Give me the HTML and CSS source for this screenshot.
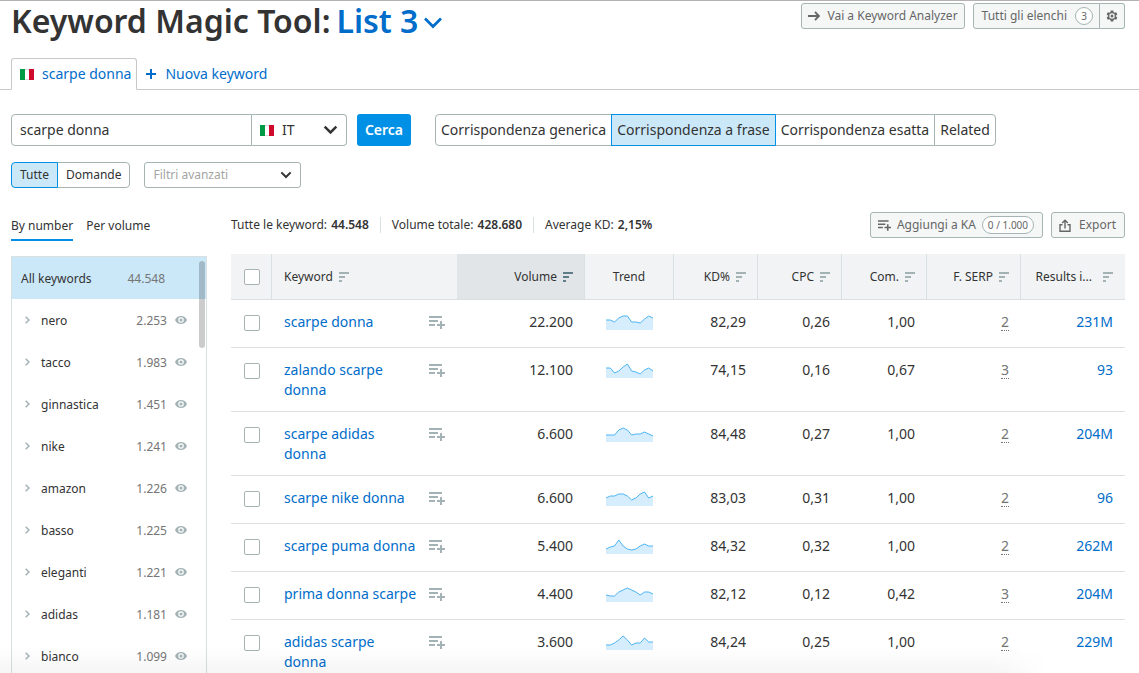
FILE: index.html
```html
<!DOCTYPE html>
<html lang="it">
<head>
<meta charset="utf-8">
<title>Keyword Magic Tool</title>
<link rel="stylesheet" href="styles.css">
</head>
<body>
<svg class="sprite" aria-hidden="true">
  <symbol id="flag" viewBox="0 0 14 11"><path fill="#fff" stroke="#d8dcdc" d="M.5.5h13v10H.5z"/><path fill="#009a44" d="M0 0h5v11H0z"/><path fill="#d00a2c" d="M9 0h5v11H9z"/></symbol>
  <symbol id="chevron" viewBox="0 0 18 12"><path fill="none" stroke="currentColor" stroke-width="3" d="m2 2 7 7 7-7"/></symbol>
  <symbol id="sort" viewBox="0 0 10 10"><path fill="currentColor" d="M0 0h10v2H0zM0 4h6v2H0zM0 8h3v2H0z"/></symbol>
  <symbol id="add" viewBox="0 0 16 13"><path fill="currentColor" d="M0 0h13v2H0zM0 4h9v2H0zM0 8h6v2H0zM11 5h2v3h3v2h-3v3h-2v-3H8V8h3z"/></symbol>
  <symbol id="eye" viewBox="0 0 12 8"><path fill="currentColor" fill-rule="evenodd" d="M6 0c2.700 0 5 1.600 6 4-1 2.400-3.300 4-6 4S1 6.400 0 4c1-2.400 3.300-4 6-4zm0 1.200a2.800 2.800 0 1 0 0 5.600 2.800 2.800 0 0 0 0-5.600zm0 1.200a1.600 1.600 0 1 1 0 3.200 1.600 1.600 0 0 1 0-3.200z"/></symbol>
  <symbol id="right" viewBox="0 0 5 8"><path fill="none" stroke="currentColor" stroke-width="1.500" d="m.7.7 3.300 3.300L.7 7.300"/></symbol>
</svg>
<div class="app">
  <header class="head">
    <h1 class="title">Keyword Magic Tool: <button class="list-name">List 3<svg class="list-chevron" viewBox="0 0 18 12"><path fill="none" stroke="currentColor" stroke-width="2.700" d="m1 1.500 8 8 8-8"/></svg></button></h1>
    <div class="actions">
      <button class="btn"><svg class="arrow" viewBox="0 0 12 10"><path fill="none" stroke="currentColor" stroke-width="1.800" d="M0 5h11M7 1l4 4-4 4"/></svg>Vai a Keyword Analyzer</button>
      <div class="joined">
        <button class="btn">Tutti gli elenchi <span class="pill">3</span></button>
        <button class="btn btn-gear" aria-label="Impostazioni"><svg class="gear" viewBox="0 0 24 24"><path fill="currentColor" fill-rule="evenodd" d="M9.500 1h5l.6 3.200 2 1.200 3.100-1.100 2.500 4.300-2.500 2.200v2.400l2.500 2.200-2.500 4.300-3.100-1.100-2 1.200-.6 3.200h-5l-.6-3.200-2-1.200-3.100 1.100-2.500-4.300 2.500-2.200v-2.400L1.300 8.600l2.500-4.300 3.100 1.100 2-1.200zM12 6.500a5.500 5.500 0 1 0 0 11 5.500 5.500 0 0 0 0-11zm0 2.500a3 3 0 1 1 0 6 3 3 0 0 1 0-6z"/></svg></button>
      </div>
    </div>
  </header>
  <nav class="tabs">
    <a class="tab tab-on" href="#"><svg class="flag"><use href="#flag"/></svg>scarpe donna</a>
    <a class="tab" href="#"><svg class="plus" viewBox="0 0 10 10"><path fill="currentColor" d="M4 0h2v4h4v2H6v4H4V6H0V4h4z"/></svg>Nuova keyword</a>
  </nav>
  <form class="search">
    <input class="query" type="text" value="scarpe donna" aria-label="Keyword">
    <div class="picker country"><select aria-label="Paese"><option>IT</option></select><svg class="flag"><use href="#flag"/></svg><svg class="caret"><use href="#chevron"/></svg></div>
    <button class="go" type="button">Cerca</button>
    <div class="segments">
      <button type="button">Corrispondenza generica</button><button type="button" class="on">Corrispondenza a frase</button><button type="button">Corrispondenza esatta</button><button type="button">Related</button>
    </div>
  </form>
  <div class="filters">
    <div class="segments small"><button class="on">Tutte</button><button>Domande</button></div>
    <div class="picker advanced"><select aria-label="Filtri avanzati"><option>Filtri avanzati</option></select><svg class="caret"><use href="#chevron"/></svg></div>
  </div>
  <div class="body">
    <aside class="side">
      <div class="side-tabs"><a class="on" href="#">By number</a><a href="#">Per volume</a></div>
      <div class="groups">
        <div class="group all"><span class="name">All keywords</span><span>44.548</span></div>
        <div class="group"><svg class="right"><use href="#right"/></svg><span class="name">nero</span><span>2.253</span><svg class="eye"><use href="#eye"/></svg></div>
        <div class="group"><svg class="right"><use href="#right"/></svg><span class="name">tacco</span><span>1.983</span><svg class="eye"><use href="#eye"/></svg></div>
        <div class="group"><svg class="right"><use href="#right"/></svg><span class="name">ginnastica</span><span>1.451</span><svg class="eye"><use href="#eye"/></svg></div>
        <div class="group"><svg class="right"><use href="#right"/></svg><span class="name">nike</span><span>1.241</span><svg class="eye"><use href="#eye"/></svg></div>
        <div class="group"><svg class="right"><use href="#right"/></svg><span class="name">amazon</span><span>1.226</span><svg class="eye"><use href="#eye"/></svg></div>
        <div class="group"><svg class="right"><use href="#right"/></svg><span class="name">basso</span><span>1.225</span><svg class="eye"><use href="#eye"/></svg></div>
        <div class="group"><svg class="right"><use href="#right"/></svg><span class="name">eleganti</span><span>1.221</span><svg class="eye"><use href="#eye"/></svg></div>
        <div class="group"><svg class="right"><use href="#right"/></svg><span class="name">adidas</span><span>1.181</span><svg class="eye"><use href="#eye"/></svg></div>
        <div class="group"><svg class="right"><use href="#right"/></svg><span class="name">bianco</span><span>1.099</span><svg class="eye"><use href="#eye"/></svg></div>
        <div class="thumb"></div>
      </div>
    </aside>
    <main class="main">
      <div class="summary">
        <span class="stat">Tutte le keyword: <b>44.548</b></span>
        <span class="stat">Volume totale: <b>428.680</b></span>
        <span class="stat">Average KD: <b>2,15%</b></span>
        <div class="actions">
          <button class="btn"><svg class="add-small"><use href="#add"/></svg>Aggiungi a KA <span class="pill">0 / 1.000</span></button>
          <button class="btn"><svg class="export" viewBox="0 0 12 13"><path fill="none" stroke="currentColor" stroke-width="1.400" d="M3.500 5.700H1v6.500h10V5.700H8.500M6 9.500V1.500M3.200 4 6 1.200 8.800 4"/></svg>Export</button>
        </div>
      </div>
      <table class="grid">
        <colgroup><col class="c-check"><col><col class="c-volume"><col class="c-trend"><col class="c-num"><col class="c-num"><col class="c-com"><col class="c-serp"><col class="c-results"></colgroup>
        <thead><tr>
          <th><input type="checkbox" aria-label="Seleziona tutte"></th>
          <th class="left">Keyword<svg class="sort"><use href="#sort"/></svg></th>
          <th class="sorted">Volume<svg class="sort"><use href="#sort"/></svg></th>
          <th class="center">Trend</th>
          <th>KD%<svg class="sort"><use href="#sort"/></svg></th>
          <th>CPC<svg class="sort"><use href="#sort"/></svg></th>
          <th>Com.<svg class="sort"><use href="#sort"/></svg></th>
          <th>F. SERP<svg class="sort"><use href="#sort"/></svg></th>
          <th>Results i...<svg class="sort sort-far"><use href="#sort"/></svg></th>
        </tr></thead>
        <tbody id="rows"></tbody>
      </table>
    </main>
  </div>
  <div class="fade"></div>
</div>
<script src="rows.js"></script>
</body>
</html>
```
FILE: styles.css
```css
* { box-sizing: border-box; }
body { margin: 0; background: #fff; color: #333; font: 12px/20px "Noto Sans", sans-serif; }
button, input, select { font: inherit; color: inherit; margin: 0; }
button { padding: 0; border: 0; background: none; white-space: nowrap; }
a { color: inherit; text-decoration: none; }
svg { display: block; flex: none; }
.sprite { position: absolute; width: 0; height: 0; }

.app { height: 100vh; overflow: hidden; border-top: 1px solid #b3b1b2; }

.head { display: flex; justify-content: space-between; align-items: flex-start; height: 57px; padding: 2px 14px 0 11px; }
.title { margin: 0; font-size: 32px; line-height: 36px; font-weight: 600; display: flex; gap: 6px; white-space: nowrap; }
.list-name { display: flex; align-items: center; gap: 6px; color: #006dca; }
.list-chevron { width: 18px; height: 12px; margin-top: 4px; }

.actions { display: flex; gap: 8px; }
.btn { display: flex; align-items: center; height: 26px; padding: 0 6px; border: 1px solid #a6b4b4; border-radius: 3px; background: #f5f7f7; color: #666; }
.joined { display: flex; }
.joined .btn:first-child { padding-left: 8px; border-radius: 3px 0 0 3px; }
.joined .btn-gear { border-radius: 0 3px 3px 0; border-left: 0; }
.pill { margin-left: 8px; padding: 0 5px; height: 18px; min-width: 18px; border: 1px solid #a6b4b4; border-radius: 9px; background: #fff; font-size: 10px; line-height: 16px; }
.arrow { width: 12px; height: 10px; margin-right: 7px; }
.gear { width: 12px; height: 12px; }

.tabs { display: flex; height: 32px; padding-left: 11px; font-size: 14px; color: #006dca; box-shadow: inset 0 -1px #c8c8c8; }
.tab { display: flex; align-items: center; padding: 0 9px; gap: 9px; }
.tab-on { padding: 0 5px 0 8px; gap: 8px; border: 1px solid #c8c8c8; border-bottom-color: #fff; border-radius: 3px 3px 0 0; background: #fff; }
.flag { width: 14px; height: 11px; }
.plus { width: 10px; height: 10px; }

.search { display: flex; height: 32px; margin: 24px 14px 0 11px; font-size: 14px; }
.query { width: 241px; padding: 0 8px; border: 1px solid #a6b4b4; border-radius: 4px 0 0 4px; background: #fff; outline: 0; }
.picker { display: grid; align-items: center; }
.picker > * { grid-area: 1 / 1; }
.picker select { width: 100%; height: 100%; appearance: none; background: #fff; border: 1px solid #a6b4b4; border-radius: 3px; padding: 0 8px; }
.picker svg { pointer-events: none; }
.country { width: 95px; }
.country select { border-left: 0; border-radius: 0 4px 4px 0; padding-left: 30px; }
.country .flag { margin-left: 8px; }
.caret { justify-self: end; width: 15px; height: 10px; margin-right: 9px; }
.go { width: 54px; margin: 0 24px 0 10px; border-radius: 3px; background: #0091e6; color: #fff; font-weight: 600; }
.segments { display: flex; }
.segments button { padding: 0 5px; border: 1px solid #a6b4b4; margin-left: -1px; background: #fff; }
.segments button:first-child { border-radius: 4px 0 0 4px; margin-left: 0; }
.segments button:last-child { border-radius: 0 4px 4px 0; }
.segments .on { position: relative; border-color: #0091e6; background: #cbe8f9; }

.filters { display: flex; gap: 14px; height: 26px; margin: 16px 14px 0 11px; }
.filters .small button { padding: 0 8px; }
.advanced { width: 157px; color: #a5a5a5; }
.advanced .caret { width: 12px; height: 8px; color: #333; }

.body { display: flex; gap: 24px; padding: 24px 14px 0 11px; }
.side { flex: none; width: 196px; }
.side-tabs { display: flex; gap: 13px; height: 29px; }
.side-tabs a { padding-top: 4px; }
.side-tabs .on { border-bottom: 2px solid #0091e6; }
.groups { position: relative; margin-top: 15px; border: 1px solid #d9e0e2; }
.group { display: flex; align-items: center; height: 42px; padding: 0 19px 0 13px; color: #757575; }
.group span { padding-top: 2px; }
.group.all { padding: 0 41px 0 9px; background: #cbe8f9; }
.group .name { flex: 1; color: #333; }
.right { width: 5px; height: 8px; margin-right: 11px; color: #a3b3b5; }
.eye { width: 12px; height: 8px; margin-left: 8px; color: #a3b3b5; }
.thumb { position: absolute; top: 4px; right: 1px; width: 6px; height: 87px; border-radius: 3px; background: rgba(0, 0, 0, .2); }

.main { flex: 1; min-width: 0; }
.summary { display: flex; align-items: center; height: 26px; }
.stat { line-height: 16px; white-space: nowrap; }
.stat b { margin-left: 1px; font-weight: 600; }
.stat + .stat { margin-left: 11px; padding-left: 11px; border-left: 1px solid #d9e0e2; }
.summary .actions { margin-left: auto; }
.summary .btn { padding: 0 8px 0 7px; }
.summary .pill { margin-left: 6px; }
.add-small { width: 13px; height: 11px; margin-right: 6px; }
.export { width: 12px; height: 13px; margin-right: 8px; }

.grid { width: 100%; margin-top: 16px; table-layout: fixed; border-spacing: 0; font-size: 14px; text-align: right; }
.c-check { width: 41px; }
.c-volume { width: 128px; }
.c-trend { width: 89px; }
.c-num { width: 84px; }
.c-com { width: 85px; }
.c-serp { width: 94px; }
.c-results { width: 104px; }
th { height: 46px; padding: 0 11px 0 8px; font-size: 12px; font-weight: 400; background: #f1f3f5; border-bottom: 1px solid #d9e0e2; border-right: 1px solid #d9e0e2; white-space: nowrap; }
th:first-child { padding: 0 11px; }
th:last-child { border-right: 0; padding-right: 12px; }
th.left { text-align: left; padding-left: 12px; border-right: 0; }
th.center { text-align: center; padding: 0; }
th.sorted { background: #e1e5e7; }
.sort { display: inline-block; width: 10px; height: 10px; margin-left: 6px; vertical-align: -1px; color: #a3b3b5; }
.sorted .sort { color: #5f7d87; }
.sort-far { margin-left: 11px; }
td { height: 48px; padding: 12px 12px 11px; vertical-align: top; border-bottom: 1px solid #dde0e1; }
input[type="checkbox"] { display: block; width: 16px; height: 16px; margin: 0 0 0 2px; appearance: none; border: 1px solid #a6b4b4; border-radius: 2px; background: #fff; }
td input[type="checkbox"] { margin: 3px 0 0 1px; }
.kw { display: flex; justify-content: space-between; text-align: left; }
.kw a { width: 135px; }
td a { color: #006dca; }
.add { width: 16px; height: 13px; margin: 4px 0 0; color: #a3b3b5; }
.spark { width: 47px; height: 15px; margin: 3px auto 0; }
.serp { display: inline-block; line-height: 17px; color: #757575; border-bottom: 1px dotted #757575; }

.fade { position: fixed; left: 0; right: 90px; bottom: 0; height: 26px; pointer-events: none; background: linear-gradient(rgba(0, 0, 0, 0), rgba(0, 0, 0, .04)); -webkit-mask-image: linear-gradient(to left, transparent, #000 60px); mask-image: linear-gradient(to left, transparent, #000 60px); }
```
FILE: rows.js
```js
const rows = [
  ["scarpe donna", "22.200", [5,5,7,3,1,1,7,7,8,4,1,3], "82,29", "0,26", "1,00", "2", "231M"],
  ["zalando scarpe donna", "12.100", [5,5,10,8,4,1,8,9,11,7,5,8], "74,15", "0,16", "0,67", "3", "93"],
  ["scarpe adidas donna", "6.600", [8,8,8,3,1,3,8,7,7,5,7,9], "84,48", "0,27", "1,00", "2", "204M"],
  ["scarpe nike donna", "6.600", [7,5,5,3,3,5,9,7,3,1,7,5], "83,03", "0,31", "1,00", "2", "96"],
  ["scarpe puma donna", "5.400", [10,8,7,1,7,10,11,10,7,5,7,7], "84,32", "0,32", "1,00", "2", "262M"],
  ["prima donna scarpe", "4.400", [8,9,9,5,3,1,3,5,8,5,5,7], "82,12", "0,12", "0,42", "3", "204M"],
  ["adidas scarpe donna", "3.600", [10,10,8,5,1,5,10,8,8,3,7,7], "84,24", "0,25", "1,00", "2", "229M"],
];
document.getElementById("rows").innerHTML = rows.map(([kw, vol, trend, kd, cpc, com, serp, res]) => {
  const line = trend.map((y, i) => `${(i * 47 / 11).toFixed(1)},${y}`).join(" ");
  return `<tr>
    <td><input type="checkbox" aria-label="${kw}"></td>
    <td><div class="kw"><a href="#">${kw}</a><svg class="add"><use href="#add"/></svg></div></td>
    <td>${vol}</td>
    <td><svg class="spark" viewBox="0 0 47 15"><polygon fill="#d5edfc" points="0,15 ${line} 47,15"/><polyline fill="none" stroke="#4db5f5" points="${line}"/></svg></td>
    <td>${kd}</td><td>${cpc}</td><td>${com}</td>
    <td><span class="serp">${serp}</span></td>
    <td><a href="#">${res}</a></td>
  </tr>`;
}).join("");
```
